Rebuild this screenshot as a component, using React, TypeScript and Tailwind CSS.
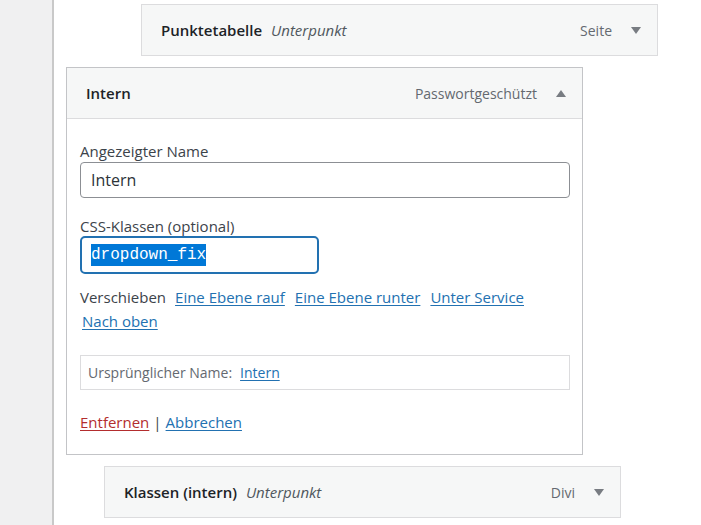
import React from "react";

type ItemProps = {
  title: string;
  subtitle?: string;
  kind: string;
  open?: boolean;
};

function Caret({ up }: { up?: boolean }) {
  return up ? (
    <span className="inline-block h-0 w-0 border-x-[5px] border-b-[7px] border-x-transparent border-b-[#787c82]" />
  ) : (
    <span className="inline-block h-0 w-0 border-x-[5px] border-t-[7px] border-x-transparent border-t-[#787c82]" />
  );
}

function ItemBar({ title, subtitle, kind, open }: ItemProps) {
  return (
    <div className="flex h-[50px] items-center justify-between pl-[19px] pr-[16px]">
      <div className="flex items-baseline gap-[9px] text-[15px]">
        <span className="font-semibold text-[#1d2327]">{title}</span>
        {subtitle && <span className="italic text-[#50575e]">{subtitle}</span>}
      </div>
      <div className="flex items-center gap-[19px] text-[#646970]">
        <span>{kind}</span>
        <Caret up={open} />
      </div>
    </div>
  );
}

function MenuItem(props: ItemProps & { className?: string }) {
  return (
    <div className={`w-[517px] border border-[#dcdcde] bg-[#f6f7f7] ${props.className ?? ""}`}>
      <ItemBar {...props} />
    </div>
  );
}

function Link({ children }: { children: React.ReactNode }) {
  return <a className="text-[#2271b1] underline underline-offset-2">{children}</a>;
}

export default function App() {
  return (
    <div
      className="flex h-[525px] w-[701px] overflow-hidden bg-white text-[14px] text-[#3c434a]"
      style={{ fontFamily: '"Open Sans", "Noto Sans", sans-serif' }}
    >
      <div className="w-[54px] shrink-0 border-r-2 border-[#c9c9c9] bg-[#f0f0f1]" />

      <div className="flex flex-col pt-[4px]">
        <MenuItem className="ml-[87px]" title="Punktetabelle" subtitle="Unterpunkt" kind="Seite" />

        {/* expanded item with its settings */}
        <div className="ml-[12px] mt-[11px] w-[517px] border border-[#c3c4c7] bg-white">
          <div className="border-b border-[#dcdcde] bg-[#f6f7f7]">
            <ItemBar title="Intern" kind="Passwortgeschützt" open />
          </div>
          <div className="px-[13px] pb-[20px] pt-[22px] text-[15px]">
            <label className="block leading-[20px] text-[#3c434a]">Angezeigter Name</label>
            <input
              readOnly
              value="Intern"
              className="mt-[1px] block h-[36px] w-[490px] rounded-[4px] border border-[#8c8f94] px-[10px] text-[16px] text-[#2c3338] outline-none"
            />
            <label className="mt-[18px] block leading-[20px] text-[#3c434a]">CSS-Klassen (optional)</label>
            <div className="flex h-[38px] w-[239px] items-center rounded-[5px] border-2 border-[#2271b1] px-[9px]">
              <span
                className="bg-[#0078d7] text-[16px] leading-[22px] text-white"
                style={{ fontFamily: '"Liberation Mono", monospace' }}
              >
                dropdown_fix
              </span>
            </div>
            <div className="mt-[11px] flex flex-wrap gap-x-[10px] leading-[24px]">
              <span className="mr-[-1px]">Verschieben</span>
              <Link>Eine Ebene rauf</Link>
              <Link>Eine Ebene runter</Link>
              <Link>Unter Service</Link>
              <span className="ml-[2px]">
                <Link>Nach oben</Link>
              </span>
            </div>
            <div className="mt-[22px] flex h-[35px] w-[490px] items-center gap-[8px] border border-[#dcdcde] px-[7px] text-[14px] text-[#646970]">
              <span>Ursprünglicher Name:</span>
              <Link>Intern</Link>
            </div>
            <div className="mt-[20px] leading-[24px]">
              <a className="text-[#b32d2e] underline underline-offset-2">Entfernen</a>
              <span className="mx-[4px] text-[#3c434a]">|</span>
              <Link>Abbrechen</Link>
            </div>
          </div>
        </div>

        <MenuItem className="ml-[50px] mt-[11px]" title="Klassen (intern)" subtitle="Unterpunkt" kind="Divi" />
      </div>
    </div>
  );
}
